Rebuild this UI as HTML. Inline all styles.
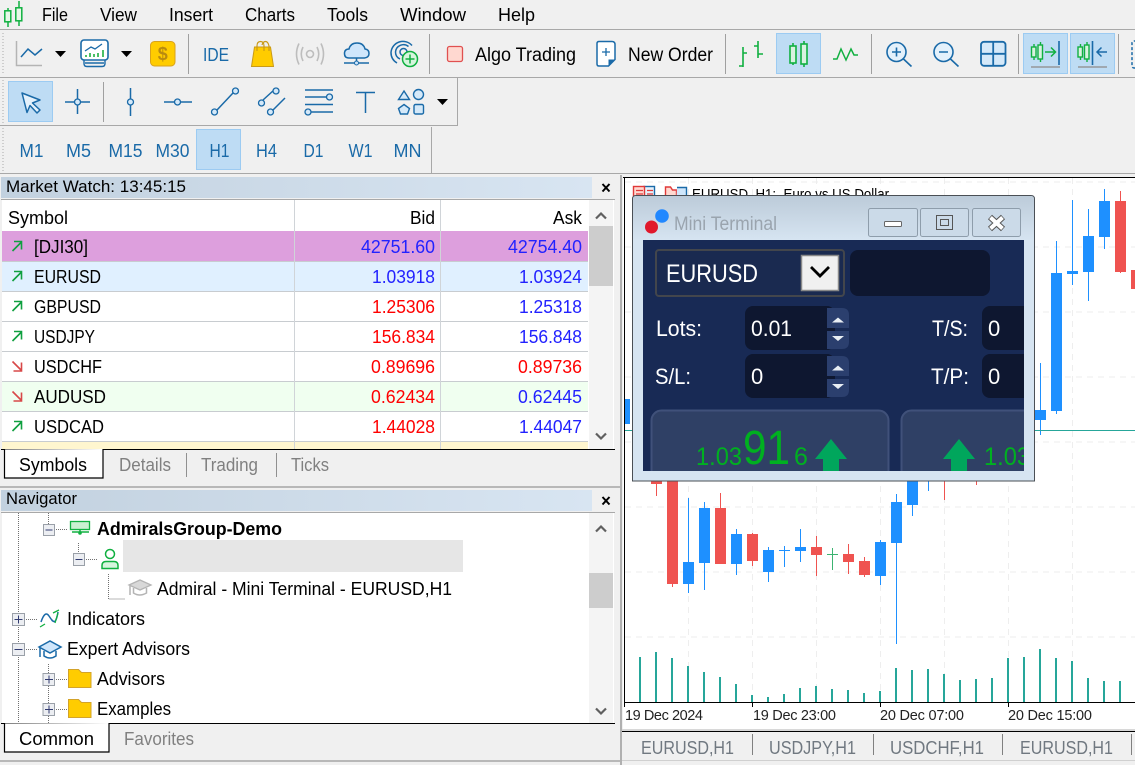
<!DOCTYPE html>
<html><head><meta charset="utf-8"><title>MetaTrader</title>
<style>
html,body{margin:0;padding:0;background:#f0f0f0;overflow:hidden}
svg{display:block}
text{font-family:"Liberation Sans",sans-serif;font-size:18px;fill:#000;white-space:pre}
.b{fill:#1a6aa8;font-size:18.5px}
.g{fill:#808080}
.blue{fill:#2222ff}
.red{fill:#ff0000}
.ic{fill:none;stroke:#1a6aa8;stroke-width:1.5}
.gr{fill:none;stroke:#10b040;stroke-width:1.5}
</style></head><body>
<svg width="1135" height="765" viewBox="0 0 1135 765" xmlns="http://www.w3.org/2000/svg">
<defs>
<linearGradient id="tb" x1="0" x2="1" y1="0" y2="0"><stop offset="0" stop-color="#c2d1df"/><stop offset="1" stop-color="#d8e5f2"/></linearGradient>
<linearGradient id="wt" x1="0" x2="0" y1="0" y2="1"><stop offset="0" stop-color="#bccbd9"/><stop offset="1" stop-color="#d6e4f1"/></linearGradient>
<clipPath id="inner"><rect x="643" y="240" width="381" height="231"/></clipPath>
<clipPath id="chartclip"><rect x="625" y="178" width="510" height="524"/></clipPath>
</defs>
<rect width="1135" height="765" fill="#f0f0f0"/>

<!-- menu bar -->
<g fill="none" stroke="#10b040" stroke-width="1.5"><path d="M8 8v19M19 1v25"/><rect x="4.8" y="10.8" width="6" height="11" fill="#e8f8e8"/><rect x="15.8" y="7.8" width="6" height="13" fill="#e8f8e8"/></g>
<text x="42" y="21" textLength="26" lengthAdjust="spacingAndGlyphs">File</text>
<text x="100" y="21" textLength="37" lengthAdjust="spacingAndGlyphs">View</text>
<text x="169" y="21" textLength="44" lengthAdjust="spacingAndGlyphs">Insert</text>
<text x="245" y="21" textLength="50" lengthAdjust="spacingAndGlyphs">Charts</text>
<text x="327" y="21" textLength="41" lengthAdjust="spacingAndGlyphs">Tools</text>
<text x="400" y="21" textLength="66" lengthAdjust="spacingAndGlyphs">Window</text>
<text x="498" y="21" textLength="37" lengthAdjust="spacingAndGlyphs">Help</text>
<rect x="0" y="29" width="1135" height="1" fill="#a8a8a8"/>

<!-- toolbar 1 -->
<path d="M3 33v40" stroke="#aaa" stroke-dasharray="1 2"/>
<path d="M16.5 41v24.5H42" fill="none" stroke="#b4b4b4" stroke-width="1.5"/>
<path d="M21 57l7-8 7 6 7-6" class="ic"/>
<path d="M55 51h11l-5.5 6z"/>
<rect x="81" y="40" width="27" height="20" rx="3" fill="#fff" stroke="#1a6aa8" stroke-width="1.6"/>
<path d="M84 60.5v3q0 3 3 3h15q3 0 3-3v-3M85 63h19" fill="none" stroke="#1a6aa8" stroke-width="1.4"/>
<path d="M85 51l6-4 4 2 7-5" fill="none" stroke="#1a6aa8" stroke-width="1.3"/>
<path d="M86 57v-2M90 57v-4M94 57v-3M98 57v-4M103 57v-7" stroke="#20b040" stroke-width="1.6"/>
<path d="M121 51h11l-5.5 6z"/>
<rect x="150.5" y="41.5" width="24.5" height="24.5" rx="4" fill="#ffcc00" stroke="#d9a21c"/>
<text x="162.7" y="60" text-anchor="middle" style="font-size:18px;font-weight:bold;fill:#b98b10">$</text>
<rect x="188" y="34" width="1" height="40" fill="#a0a0a0"/>
<text x="203" y="61" class="b" textLength="26" lengthAdjust="spacingAndGlyphs">IDE</text>
<path d="M254.5 47h16l3 19.5h-22z" fill="#ffcc00" stroke="#c99a18"/>
<path d="M257 51v-5q0-4.5 3.5-4.5t3.5 4.5v5M262 45q1-3.5 3.5-3.5t3.5 4.5v5" fill="none" stroke="#c99a18" stroke-width="1.2"/>
<g fill="none" stroke="#bdbdbd" stroke-width="1.6"><circle cx="310" cy="54" r="3.5"/><path d="M303 47q-3.5 7 0 14M317 47q3.5 7 0 14M299 43.5q-5 10.5 0 21M321 43.5q5 10.5 0 21"/></g>
<path d="M349 58q-4.5 0-4.500-4.500t4.500-4.500q1.500-6 8-6t8 6q4 .5 4 4.500t-4.500 4.500z" fill="#cfe6fb" stroke="#1a6aa8" stroke-width="1.5"/>
<path d="M344 63h25M356.5 58v5" stroke="#1a6aa8" stroke-width="1.5"/><circle cx="356.5" cy="63" r="2" fill="#cfe6fb" stroke="#1a6aa8"/>
<g fill="none" stroke="#1a6aa8" stroke-width="1.5"><path d="M397 63q-6-3.5-6-10.500a12 12 0 0 1 21-7"/><path d="M400 59q-4.500-2-4.500-7a8 8 0 0 1 13-5.500"/><circle cx="403.5" cy="52" r="3.5"/></g>
<circle cx="410" cy="59" r="7.5" fill="#d6f5dd" stroke="#10b040" stroke-width="1.5"/><path d="M405.5 59h9M410 54.500v9" stroke="#10b040" stroke-width="1.5"/>
<rect x="429" y="34" width="1" height="40" fill="#a0a0a0"/>
<rect x="447.5" y="46.5" width="15" height="15" rx="2" fill="#ffd8d0" stroke="#e05050" stroke-width="1.3"/>
<text x="475" y="61" style="font-size:19px" textLength="101" lengthAdjust="spacingAndGlyphs">Algo Trading</text>
<path d="M599 41.5h13q3 0 3 3v15l-6.500 6.500h-9.500q-2 0-2-2v-20.500q0-2 2-2z" fill="#fff" stroke="#1a6aa8" stroke-width="1.5"/>
<path d="M602 52h8M606 48v8" stroke="#1a6aa8" stroke-width="1.3"/><path d="M615 59.5h-6.500v6.500z" fill="#1a6aa8"/>
<text x="628" y="61" style="font-size:19px" textLength="85" lengthAdjust="spacingAndGlyphs">New Order</text>
<rect x="725" y="34" width="1" height="40" fill="#a0a0a0"/>
<path d="M743 47v20M739 66h4M743 53h4M758 41v17M754 46h4M758 54h5" fill="none" stroke="#10b040" stroke-width="1.6"/>
<rect x="776.5" y="33.5" width="44" height="40" fill="#bedcf4" stroke="#9ccbf2"/>
<g fill="#d9f2e0" stroke="#10b040" stroke-width="1.6"><path d="M793 43v22M804 41v26"/><rect x="790" y="46" width="6" height="17"/><rect x="801" y="44" width="6" height="20"/></g>
<path d="M833 59h4l4-10 5 11 5-11 3 6h4" class="gr"/>
<rect x="871" y="34" width="1" height="40" fill="#a0a0a0"/>
<g fill="#e4f1fb" stroke="#1a6aa8" stroke-width="1.6"><circle cx="896.5" cy="52" r="9.5"/><path d="M903.5 59l8 7.500M892 52h9M896.500 47.500v9" fill="none"/><circle cx="943.5" cy="52" r="9.5"/><path d="M950.5 59l8 7.500M939 52h9" fill="none"/></g>
<rect x="981" y="41.8" width="24.5" height="24" rx="3" fill="#d5e9f9" stroke="#1a6aa8" stroke-width="1.8"/><path d="M993.2 42v24M981 53.800h24.500" stroke="#1a6aa8" stroke-width="1.8"/>
<rect x="1018" y="34" width="1" height="40" fill="#a0a0a0"/>
<rect x="1023.5" y="33.5" width="44" height="40" fill="#bedcf4" stroke="#9ccbf2"/>
<rect x="1070.5" y="33.5" width="44" height="40" fill="#bedcf4" stroke="#9ccbf2"/>
<g fill="#d9f2e0" stroke="#10b040" stroke-width="1.4"><path d="M1034 44v16M1040.500 42v20M1080.500 44v16M1087 42v20"/><rect x="1031.5" y="47" width="4.5" height="10"/><rect x="1038" y="45" width="4.5" height="14"/><rect x="1078" y="47" width="4.5" height="10"/><rect x="1084.5" y="45" width="4.5" height="14"/></g>
<path d="M1045 52h10M1051 47.500l4.500 4.500-4.500 4.500" fill="none" stroke="#10b040" stroke-width="1.5"/>
<path d="M1059 41v24M1092.500 41v24" stroke="#1a6aa8" stroke-width="1.6"/>
<path d="M1097 52h10M1101.500 47.500l-4.500 4.500 4.500 4.500" fill="none" stroke="#1a6aa8" stroke-width="1.5"/>
<path d="M1031 67h29M1078 67h29" stroke="#a0a8b0" stroke-width="2"/>
<rect x="1118" y="34" width="1" height="40" fill="#a0a0a0"/>
<rect x="1132" y="41" width="10" height="27" rx="2" fill="none" stroke="#1a6aa8" stroke-width="1.5" stroke-dasharray="3 2"/>
<rect x="0" y="77" width="1135" height="1" fill="#a8a8a8"/>

<!-- toolbar 2 -->
<path d="M3 80v44" stroke="#aaa" stroke-dasharray="1 2"/>
<rect x="8.5" y="81.5" width="44" height="40" fill="#bedcf4" stroke="#9ccbf2"/>
<path d="M22 93l18 7-7.500 3 7.500 7-3 3-7-7.500-3 7z" fill="#e4f1fb" stroke="#1a6aa8" stroke-width="1.5" stroke-linejoin="round"/>
<path d="M65 102h25M77.500 89v25" class="ic"/><circle cx="77.5" cy="102" r="3" fill="#d5e9f9" stroke="#1a6aa8" stroke-width="1.3"/>
<rect x="103" y="82" width="1" height="40" fill="#a0a0a0"/>
<path d="M130.500 88v28" class="ic"/><circle cx="130.5" cy="102" r="3" fill="#d5e9f9" stroke="#1a6aa8" stroke-width="1.3"/>
<path d="M164 102h28" class="ic"/><circle cx="177.5" cy="102" r="3" fill="#d5e9f9" stroke="#1a6aa8" stroke-width="1.3"/>
<path d="M217 110l16-17" class="ic"/><circle cx="214.5" cy="112" r="3" fill="#d5e9f9" stroke="#1a6aa8" stroke-width="1.3"/><circle cx="235.5" cy="91" r="3" fill="#d5e9f9" stroke="#1a6aa8" stroke-width="1.3"/>
<path d="M263 100l11-10M273 110l12-12" class="ic"/><circle cx="261.5" cy="103" r="3" fill="#d5e9f9" stroke="#1a6aa8" stroke-width="1.3"/><circle cx="276" cy="91" r="3" fill="#d5e9f9" stroke="#1a6aa8" stroke-width="1.3"/><circle cx="270.5" cy="112" r="3" fill="#d5e9f9" stroke="#1a6aa8" stroke-width="1.3"/>
<path d="M305 90h28M305 97h25M305 104.500h28M311 112h22" class="ic"/><circle cx="329.5" cy="97" r="3" fill="#d5e9f9" stroke="#1a6aa8" stroke-width="1.3"/><circle cx="308" cy="112" r="3" fill="#d5e9f9" stroke="#1a6aa8" stroke-width="1.3"/>
<path d="M356 92.500h19M365.500 92.500V113" class="ic"/>
<path d="M404 91l5.500 8.500h-11z" fill="#d5e9f9" stroke="#1a6aa8" stroke-width="1.4"/><circle cx="418.5" cy="94.5" r="5" fill="#d5e9f9" stroke="#1a6aa8" stroke-width="1.4"/>
<path d="M404 104.500l5.500 4-2 5.500h-7l-2-5.500z" fill="#d5e9f9" stroke="#1a6aa8" stroke-width="1.4"/><rect x="414" y="104.5" width="9.5" height="9.5" rx="1.5" fill="#d5e9f9" stroke="#1a6aa8" stroke-width="1.4"/>
<path d="M437 99h11l-5.500 6z"/>
<rect x="457" y="78" width="1" height="48" fill="#a8a8a8"/>
<rect x="0" y="125" width="458" height="1" fill="#a8a8a8"/>

<!-- toolbar 3 -->
<path d="M3 128v44" stroke="#aaa" stroke-dasharray="1 2"/>
<rect x="196.5" y="129.5" width="44" height="40" fill="#bedcf4" stroke="#9ccbf2"/>
<text x="31.5" y="157" class="b" text-anchor="middle" textLength="24" lengthAdjust="spacingAndGlyphs">M1</text>
<text x="78.5" y="157" class="b" text-anchor="middle" textLength="25" lengthAdjust="spacingAndGlyphs">M5</text>
<text x="125.5" y="157" class="b" text-anchor="middle" textLength="34" lengthAdjust="spacingAndGlyphs">M15</text>
<text x="172.5" y="157" class="b" text-anchor="middle" textLength="34" lengthAdjust="spacingAndGlyphs">M30</text>
<text x="219.5" y="157" class="b" text-anchor="middle" textLength="20" lengthAdjust="spacingAndGlyphs">H1</text>
<text x="266.5" y="157" class="b" text-anchor="middle" textLength="21" lengthAdjust="spacingAndGlyphs">H4</text>
<text x="313.5" y="157" class="b" text-anchor="middle" textLength="20" lengthAdjust="spacingAndGlyphs">D1</text>
<text x="360.5" y="157" class="b" text-anchor="middle" textLength="24" lengthAdjust="spacingAndGlyphs">W1</text>
<text x="407.5" y="157" class="b" text-anchor="middle" textLength="28" lengthAdjust="spacingAndGlyphs">MN</text>
<rect x="431" y="127" width="1" height="46" fill="#a8a8a8"/>
<rect x="0" y="173" width="1135" height="1" fill="#a8a8a8"/>

<!-- market watch -->
<rect x="1" y="177" width="591" height="21" fill="url(#tb)"/>
<text x="6" y="192" style="font-size:16.5px" textLength="180" lengthAdjust="spacingAndGlyphs">Market Watch: 13:45:15</text>
<path d="M602.5 184l7 7.500M609.500 184l-7 7.500" stroke="#000" stroke-width="2"/>
<rect x="1" y="199" width="614" height="1" fill="#a8a8a8"/>
<rect x="2" y="200" width="612" height="249" fill="#fff"/>
<rect x="2" y="231" width="586" height="30" fill="#dd9fdd"/>
<rect x="2" y="261" width="586" height="30" fill="#e0f0ff"/>
<rect x="2" y="381" width="586" height="30" fill="#f0fff0"/>
<rect x="2" y="441" width="586" height="8" fill="#fff6cf"/>
<path d="M2 261.500h586M2 291.500h586M2 321.500h586M2 351.500h586M2 381.500h586M2 411.500h586M2 441.500h586" stroke="#c8ccd0"/>
<path d="M294.500 200v249M440.500 200v249" stroke="#d0d4d8"/>
<rect x="589" y="200" width="24" height="249" fill="#f4f4f4"/>
<rect x="589" y="226" width="24" height="60" fill="#cdcdcd"/>
<path d="M596 218.500l5-5 5 5M596 433.500l5 5 5-5" fill="none" stroke="#606060" stroke-width="2.2"/>
<text x="8" y="224" textLength="60" lengthAdjust="spacingAndGlyphs">Symbol</text>
<text x="410" y="224" textLength="25" lengthAdjust="spacingAndGlyphs">Bid</text>
<text x="553" y="224" textLength="29" lengthAdjust="spacingAndGlyphs">Ask</text>
<g fill="none" stroke-width="1.6">
<g stroke="#10a040"><path d="M12.500 251l9-9M14 241.500h7.500v8M12.500 281l9-9M14 271.500h7.500v8M12.500 311l9-9M14 301.500h7.500v8M12.500 341l9-9M14 331.500h7.500v8M12.500 431l9-9M14 421.500h7.500v8"/></g>
<g stroke="#d84848"><path d="M12.500 361.500l9 9M21.500 362.500v8.500h-8M12.500 391.500l9 9M21.500 392.500v8.500h-8"/></g>
</g>
<text x="34" y="253" textLength="54" lengthAdjust="spacingAndGlyphs">[DJI30]</text>
<text x="34" y="283" textLength="67" lengthAdjust="spacingAndGlyphs">EURUSD</text>
<text x="34" y="313" textLength="67" lengthAdjust="spacingAndGlyphs">GBPUSD</text>
<text x="34" y="343" textLength="61" lengthAdjust="spacingAndGlyphs">USDJPY</text>
<text x="34" y="373" textLength="68" lengthAdjust="spacingAndGlyphs">USDCHF</text>
<text x="34" y="403" textLength="72" lengthAdjust="spacingAndGlyphs">AUDUSD</text>
<text x="34" y="433" textLength="70" lengthAdjust="spacingAndGlyphs">USDCAD</text>
<text x="361" y="253" class="blue" textLength="74" lengthAdjust="spacingAndGlyphs">42751.60</text>
<text x="508" y="253" class="blue" textLength="74" lengthAdjust="spacingAndGlyphs">42754.40</text>
<text x="372" y="283" class="blue" textLength="63" lengthAdjust="spacingAndGlyphs">1.03918</text>
<text x="519" y="283" class="blue" textLength="63" lengthAdjust="spacingAndGlyphs">1.03924</text>
<text x="372" y="313" class="red" textLength="63" lengthAdjust="spacingAndGlyphs">1.25306</text>
<text x="519" y="313" class="blue" textLength="63" lengthAdjust="spacingAndGlyphs">1.25318</text>
<text x="372" y="343" class="red" textLength="63" lengthAdjust="spacingAndGlyphs">156.834</text>
<text x="519" y="343" class="blue" textLength="63" lengthAdjust="spacingAndGlyphs">156.848</text>
<text x="371" y="373" class="red" textLength="64" lengthAdjust="spacingAndGlyphs">0.89696</text>
<text x="518" y="373" class="red" textLength="64" lengthAdjust="spacingAndGlyphs">0.89736</text>
<text x="371" y="403" class="red" textLength="64" lengthAdjust="spacingAndGlyphs">0.62434</text>
<text x="518" y="403" class="blue" textLength="64" lengthAdjust="spacingAndGlyphs">0.62445</text>
<text x="372" y="433" class="red" textLength="63" lengthAdjust="spacingAndGlyphs">1.44028</text>
<text x="519" y="433" class="blue" textLength="63" lengthAdjust="spacingAndGlyphs">1.44047</text>
<rect x="1" y="449" width="614" height="1" fill="#000"/>
<path d="M4.500 449.500v28.500H103V449" fill="#fff" stroke="#000" stroke-width="1.2"/>
<text x="19" y="471" textLength="68" lengthAdjust="spacingAndGlyphs">Symbols</text>
<text x="119" y="471" class="g" textLength="52" lengthAdjust="spacingAndGlyphs">Details</text>
<rect x="186" y="453" width="1" height="24" fill="#909090"/>
<text x="201" y="471" class="g" textLength="57" lengthAdjust="spacingAndGlyphs">Trading</text>
<rect x="276" y="453" width="1" height="24" fill="#909090"/>
<text x="291" y="471" class="g" textLength="38" lengthAdjust="spacingAndGlyphs">Ticks</text>
<rect x="0" y="486" width="620" height="2" fill="#b8b8b8"/>

<!-- navigator -->
<rect x="1" y="490" width="591" height="21" fill="url(#tb)"/>
<text x="6" y="504" style="font-size:16.5px" textLength="71" lengthAdjust="spacingAndGlyphs">Navigator</text>
<path d="M602.500 497l7 7.500M609.500 497l-7 7.500" stroke="#000" stroke-width="2"/>
<rect x="1" y="512" width="614" height="1" fill="#a8a8a8"/>
<rect x="2" y="513" width="612" height="210" fill="#fff"/>
<rect x="589" y="513" width="24" height="210" fill="#f4f4f4"/>
<rect x="589" y="573" width="24" height="35" fill="#cdcdcd"/>
<path d="M596 531.500l5-5 5 5M596 708.500l5 5 5-5" fill="none" stroke="#606060" stroke-width="2.2"/>
<g fill="none" stroke="#707070" stroke-dasharray="1 1">
<path d="M18.500 513v210M48.500 513v11M48.500 664v59M78.500 543v10M108.500 574v25h17M54 529.500h14M84 559.500h14M24 619.500h14M24 649.500h14M54 679.500h14M54 709.500h14"/>
</g>
<g fill="#eceef2" stroke="#9aa0a8">
<rect x="43.500" y="524.500" width="11" height="11"/><rect x="73.500" y="553.500" width="11" height="12"/><rect x="12.500" y="613.500" width="12" height="12"/><rect x="12.500" y="643.500" width="12" height="12"/><rect x="43" y="673.500" width="11.5" height="12"/><rect x="43" y="703.500" width="11.5" height="12"/>
</g>
<path d="M45.500 530h7M75.500 559.500h7M14.500 649.500h8M14.500 619.500h8M18.500 615.500v8M45 679.500h8M49 675.500v8M45 709.500h8M49 705.500v8" stroke="#303a70"/>
<rect x="70.500" y="521.500" width="19" height="8" fill="#c8f0d0" stroke="#10b040" stroke-width="1.3"/>
<path d="M72 532h17M80 529.500v4" stroke="#10b040" stroke-width="1.5"/><circle cx="80" cy="533" r="1.8" fill="#10b040"/>
<text x="97" y="535" style="font-weight:bold" textLength="185" lengthAdjust="spacingAndGlyphs">AdmiralsGroup-Demo</text>
<rect x="123" y="540" width="340" height="32" fill="#e6e6e6"/>
<circle cx="110" cy="554" r="4.500" fill="#fff" stroke="#10b040" stroke-width="1.5"/>
<path d="M102 568.500v-3q0-4 4-4h8q4 0 4 4v3z" fill="#d6f5dd" stroke="#10b040" stroke-width="1.5"/>
<path d="M129 585l11-5 11 5-11 5z" fill="#d8d8d8" stroke="#b4b4b4" stroke-width="1.3"/>
<path d="M133.500 588v5q6 4 13 0v-5M130 586v9" fill="none" stroke="#b4b4b4" stroke-width="1.5"/>
<text x="157" y="595" textLength="295" lengthAdjust="spacingAndGlyphs">Admiral - Mini Terminal - EURUSD,H1</text>
<path d="M41 622q4-12 8-6t4 5q3 3 5-9" fill="none" stroke="#1a6aa8" stroke-width="1.5"/>
<path d="M40 627l5-3M55 623l3-10M53 613l6-3" stroke="#10b040" stroke-width="1.3"/>
<text x="67" y="625" textLength="78" lengthAdjust="spacingAndGlyphs">Indicators</text>
<path d="M39 647l11-6 11 6-11 6z" fill="#cfe6fb" stroke="#1a6aa8" stroke-width="1.5"/>
<path d="M44 651v5q6 4 12 0v-5M40 648v9" fill="none" stroke="#1a6aa8" stroke-width="1.5"/>
<text x="67" y="655" textLength="123" lengthAdjust="spacingAndGlyphs">Expert Advisors</text>
<g fill="#ffcc00" stroke="#d3a32a"><path d="M68.500 672.500v-3h10l3 3h9.500v15h-22.500z"/><path d="M68.500 702.500v-3h10l3 3h9.500v15h-22.500z"/></g>
<text x="97" y="685" textLength="68" lengthAdjust="spacingAndGlyphs">Advisors</text>
<text x="97" y="715" textLength="74" lengthAdjust="spacingAndGlyphs">Examples</text>
<rect x="1" y="723" width="614" height="1" fill="#000"/>
<path d="M4.500 723.500v28.500H109V723" fill="#fff" stroke="#000" stroke-width="1.2"/>
<text x="19" y="745" textLength="75" lengthAdjust="spacingAndGlyphs">Common</text>
<text x="124" y="745" class="g" textLength="70" lengthAdjust="spacingAndGlyphs">Favorites</text>
<rect x="0" y="760" width="620" height="2" fill="#b8b8b8"/>

<!-- chart -->
<rect x="620" y="175" width="2" height="590" fill="#b0b0b0"/>
<rect x="623" y="177" width="512" height="552" fill="#fff"/>
<rect x="623" y="177" width="512" height="1" fill="#000"/>
<rect x="624" y="177" width="1" height="526" fill="#000"/>
<g clip-path="url(#chartclip)">
<path d="M625 182h510M625 247h510M625 312h510M625 377h510M625 442h510M625 507h510M625 572h510M625 637h510M688.500 178v524M752.500 178v524M816.500 178v524M880.500 178v524M944.500 178v524M1008.500 178v524M1072.500 178v524" stroke="#eeeeee" stroke-dasharray="6 5" fill="none"/>
<path fill="#1e90ff" d="M625 399h5v25h-5zM683 562h11v22h-11zM699 508h11v55h-11zM731 534h11v30h-11zM763 550h11v22h-11zM779 550h11v1h-11zM795 547h11v4h-11zM875 542h11v34h-11zM891 502h11v41h-11zM907 470h11v35h-11zM1035 410h11v10h-11zM1051 273h11v138h-11zM1067 271h11v3h-11zM1083 236h11v36h-11zM1099 201h11v36h-11z"/>
<path stroke="#1e90ff" fill="none" d="M688.500 498v95M704.500 502v88M736.500 529v46M768.500 547v35M784.500 546v21M800.500 529v33M880.500 540v45M896.500 494v150M912.500 470v46M928.500 470v21M1040.500 363v72M1056.500 241v173M1072.500 200v85M1088.500 209v92M1104.500 189v60"/>
<path fill="#ef5350" d="M651 470h11v14h-11zM667 470h11v114h-11zM715 508h11v56h-11zM747 534h11v27h-11zM811 547h11v8h-11zM843 554h11v8h-11zM859 561h11v14h-11zM1115 201h11v71h-11zM1131 270h4v19h-4z"/>
<path stroke="#ef5350" fill="none" d="M656.500 470v26M672.500 470v117M720.500 493v71M752.500 533v33M816.500 536v40M848.500 544v30M864.500 557v20M944.500 470v30M976.500 470v15M1120.500 191v82"/>
<path stroke="#3cb371" fill="none" d="M832.500 548v22M827 554.500h11"/>
<path stroke="#26a69a" d="M625 430.500h510"/>
<path stroke="#26a69a" stroke-width="2" fill="none" d="M640 702V657M656 702V652M672 702V658M688 702V666M704 702V672M720 702V677M736 702V684M752 702V695M768 702V697M784 702V694M800 702V688M816 702V686M832 702V689M848 702V690M864 702V693M880 702V691M896 702V668M912 702V670M928 702V669M944 702V674M960 702V680M976 702V679M992 702V678M1008 702V658M1024 702V657M1040 702V649M1056 702V658M1072 702V661M1088 702V678M1104 702V681M1120 702V681"/>
</g>
<rect x="624" y="702" width="511" height="1" fill="#000"/>
<path d="M624.500 702v5M752.500 702v5M880.500 702v5M1008.500 702v5" stroke="#000"/>
<text x="625" y="720" style="font-size:14.5px;fill:#222" textLength="78" lengthAdjust="spacing">19 Dec 2024</text>
<text x="753" y="720" style="font-size:14.5px;fill:#222" textLength="83" lengthAdjust="spacing">19 Dec 23:00</text>
<text x="880" y="720" style="font-size:14.5px;fill:#222" textLength="84" lengthAdjust="spacing">20 Dec 07:00</text>
<text x="1008" y="720" style="font-size:14.5px;fill:#222" textLength="84" lengthAdjust="spacing">20 Dec 15:00</text>
<!-- chart icons / title -->
<rect x="644" y="186.500" width="10.500" height="15" fill="#e4f1fb" stroke="#1a6aa8" stroke-width="1.4"/>
<rect x="633.500" y="186.500" width="11" height="15" fill="#ffd8d0" stroke="#e03838" stroke-width="1.4"/>
<path d="M636 190.500h7M636 194h7M647 190.500h6M647 194h6" stroke="#e03838" stroke-width="1.2"/>
<path d="M665.500 199v-12h5l2 3h4v9z" fill="#ffd8d0" stroke="#e03838" stroke-width="1.4"/><path d="M677 187.500h9.500v12h-10" fill="#cfe6fb" stroke="#1a6aa8" stroke-width="1.4"/>
<text x="692" y="199" style="font-size:14.500px" textLength="197" lengthAdjust="spacingAndGlyphs">EURUSD, H1:  Euro vs US Dollar</text>

<!-- chart bottom tabs -->
<rect x="622" y="729" width="513" height="2" fill="#d8d8d8"/>
<rect x="622" y="731" width="513" height="1" fill="#000"/>
<rect x="622" y="732" width="513" height="28" fill="#f0f0f0"/>
<rect x="622" y="760" width="513" height="1" fill="#d0d0d0"/>
<text x="641" y="754" style="fill:#707880" textLength="93" lengthAdjust="spacingAndGlyphs">EURUSD,H1</text>
<rect x="752" y="734" width="1" height="21" fill="#808080"/>
<text x="769" y="754" style="fill:#707880" textLength="87" lengthAdjust="spacingAndGlyphs">USDJPY,H1</text>
<rect x="873" y="734" width="1" height="21" fill="#808080"/>
<text x="890" y="754" style="fill:#707880" textLength="94" lengthAdjust="spacingAndGlyphs">USDCHF,H1</text>
<rect x="1002" y="734" width="1" height="21" fill="#808080"/>
<text x="1020" y="754" style="fill:#707880" textLength="93" lengthAdjust="spacingAndGlyphs">EURUSD,H1</text>
<rect x="1131" y="734" width="1" height="21" fill="#808080"/>

<!-- mini terminal window -->
<path d="M632.500 481V199q0-3.500 3.500-3.500h395q3.500 0 3.500 3.500v282z" fill="#d6e4f1" stroke="#4a4f55"/>
<path d="M633 240V199q0-3 3-3h395q3 0 3 3v41z" fill="url(#wt)"/>
<circle cx="651.500" cy="227" r="6.500" fill="#e0182c"/><circle cx="662" cy="216" r="6.800" fill="#2288ff"/>
<text x="674" y="230" style="font-size:19px;fill:#9aa4ae" textLength="103" lengthAdjust="spacingAndGlyphs">Mini Terminal</text>
<g fill="#cbdae8" stroke="#8e9dab">
<rect x="868.500" y="208.500" width="49" height="28" rx="2"/><rect x="920.500" y="208.500" width="48" height="28" rx="2"/><rect x="972.500" y="208.500" width="48" height="28" rx="2"/></g>
<rect x="884.500" y="221.500" width="17" height="5" rx="1" fill="#fff" stroke="#666"/>
<rect x="936.500" y="215.500" width="16" height="14" fill="none" stroke="#555"/><rect x="940.500" y="219.500" width="8" height="6" fill="none" stroke="#555"/>
<path d="M990 217l13 12M1003 217l-13 12" stroke="#555" stroke-width="6"/><path d="M990.500 217.500l12 11M1002.500 217.500l-12 11" stroke="#fff" stroke-width="4"/>
<rect x="643" y="240" width="381" height="231" fill="#182a55"/>
<g clip-path="url(#inner)">
<rect x="656" y="250" width="188" height="46" rx="3" fill="#1a2a50" stroke="#43464c" stroke-width="2"/>
<text x="666" y="282" style="font-size:25px;fill:#fff" textLength="92" lengthAdjust="spacingAndGlyphs">EURUSD</text>
<rect x="801.500" y="255.500" width="37" height="35" fill="#f0f0f0" stroke="#888" stroke-width="1.5"/>
<path d="M811 267l9 9 9-9" fill="none" stroke="#000" stroke-width="2.8"/>
<rect x="850" y="250" width="140" height="46" rx="8" fill="#0e1730"/>
<rect x="745" y="306" width="90" height="44" rx="8" fill="#0e1730"/>
<rect x="745" y="354" width="90" height="44" rx="8" fill="#0e1730"/>
<rect x="982" y="306" width="60" height="44" rx="8" fill="#0e1730"/>
<rect x="982" y="354" width="60" height="44" rx="8" fill="#0e1730"/>
<g fill="#2b3f6e"><path d="M827 308h15q7 0 7 7v13h-22zM827 331h22v11q0 7-7 7h-15zM827 356h15q7 0 7 7v13h-22zM827 379h22v11q0 7-7 7h-15z"/></g>
<g fill="#e8eef4"><path d="M832 322.500l6-5 6 5zM832 336l6 5 6-5zM832 370.500l6-5 6 5zM832 384l6 5 6-5z"/></g>
<text x="656" y="336" style="font-size:22px;fill:#fff" textLength="46" lengthAdjust="spacingAndGlyphs">Lots:</text>
<text x="751" y="336" style="font-size:22px;fill:#fff" textLength="41" lengthAdjust="spacingAndGlyphs">0.01</text>
<text x="932" y="336" style="font-size:22px;fill:#fff" textLength="36" lengthAdjust="spacingAndGlyphs">T/S:</text>
<text x="988" y="336" style="font-size:22px;fill:#fff">0</text>
<text x="655" y="384" style="font-size:22px;fill:#fff" textLength="36" lengthAdjust="spacingAndGlyphs">S/L:</text>
<text x="751" y="384" style="font-size:22px;fill:#fff">0</text>
<text x="931" y="384" style="font-size:22px;fill:#fff" textLength="38" lengthAdjust="spacingAndGlyphs">T/P:</text>
<text x="988" y="384" style="font-size:22px;fill:#fff">0</text>
<rect x="651.500" y="410.500" width="237" height="80" rx="10" fill="#2f4065" stroke="#40517a" stroke-width="2"/>
<rect x="901.500" y="410.500" width="237" height="80" rx="10" fill="#2f4065" stroke="#40517a" stroke-width="2"/>
<text x="696" y="465" style="font-size:25px;fill:#00b020" textLength="46" lengthAdjust="spacingAndGlyphs">1.03</text>
<text x="743" y="464" style="font-size:48px;fill:#00b020" textLength="47" lengthAdjust="spacingAndGlyphs">91</text>
<text x="794" y="465" style="font-size:25px;fill:#00b020">6</text>
<path d="M831 439l16 20h-8v14h-16v-14h-8z" fill="#00a65c"/>
<path d="M959 439l16 20h-8v14h-16v-14h-8z" fill="#00a65c"/>
<text x="984" y="465" style="font-size:25px;fill:#00b020" textLength="46" lengthAdjust="spacingAndGlyphs">1.03</text>
</g>
</svg>
</body></html>
